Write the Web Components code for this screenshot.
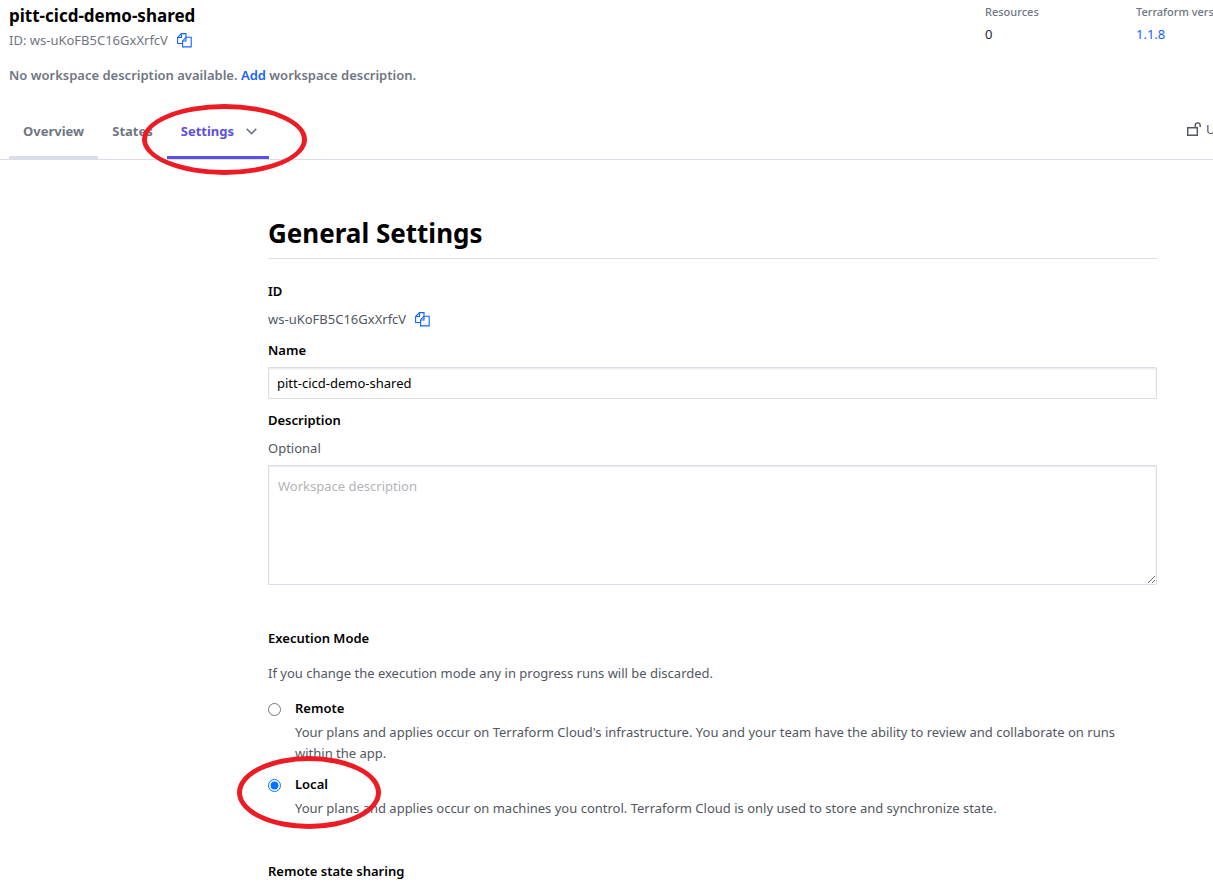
<!DOCTYPE html>
<html lang="en">
<head>
<meta charset="utf-8">
<title>pitt-cicd-demo-shared | General Settings</title>
<style>
  html { background: #fff; }
  body { margin: 0; font: 13px/20px "Noto Sans", "Open Sans", sans-serif; color: #525761; overflow-x: hidden; }
</style>
</head>
<body>
<workspace-page></workspace-page>

<script>
const define = (name, html) => {
  const template = document.createElement('template');
  template.innerHTML = html;
  customElements.define(name, class extends HTMLElement {
    constructor() {
      super();
      this.attachShadow({ mode: 'open' }).append(template.content.cloneNode(true));
    }
  });
};

define('copy-button', `
  <style>
    :host { display: inline-flex; }
    button { display: flex; padding: 0; border: 0; background: none; cursor: pointer; }
    svg { display: block; }
  </style>
  <button type="button" aria-label="Copy ID">
    <svg width="15" height="15" viewBox="0 0 15 15" fill="none" stroke="#1563ff" stroke-width="1.100">
      <path d="M5.500 10.500H.6V4.500L4.500.6H9V4"/><path d="M.6 4.500H4.500V.6"/>
      <path d="M5.600 8 9 4.300H14.200V13.900H5.600Z"/><path d="M5.600 8H9V4.300"/>
    </svg>
  </button>`);

define('red-ellipse', `
  <style>
    :host { display: block; position: absolute; pointer-events: none; z-index: 2; }
    div { box-sizing: border-box; width: 100%; height: 100%; border: 5px solid #ed1c24; border-radius: 50%; }
  </style>
  <div></div>`);

define('workspace-stat', `
  <style>
    :host { display: block; min-width: 0; white-space: nowrap; }
    dl, dd { margin: 0; }
    dt { font-size: 11px; font-weight: 500; color: #6f7682; line-height: 16px; }
    dd { margin-top: 4px; line-height: 20px; color: #252937; }
  </style>
  <dl><dt><slot name="label"></slot></dt><dd><slot></slot></dd></dl>`);

define('workspace-header', `
  <style>
    :host { display: block; }
    .top { display: grid; grid-template-columns: minmax(0, 1fr) 151px 77px; padding: 4px 0 0 9px; }
    h2 { margin: 0; font-size: 17px; line-height: 24px; font-weight: 700; color: #000; }
    .id { display: flex; align-items: center; gap: 9px; line-height: 24px; color: #6f7682; }
    .desc { margin: 12px 0 0; line-height: 22px; font-weight: 600; color: #6f7682; }
    a { color: #1563ff; text-decoration: none; }
  </style>
  <div class="top">
    <div>
      <h2>pitt-cicd-demo-shared</h2>
      <div class="id"><span>ID: ws-uKoFB5C16GxXrfcV</span><copy-button></copy-button></div>
      <p class="desc">No workspace description available. <a href="#add">Add</a> workspace description.</p>
    </div>
    <workspace-stat><span slot="label">Resources</span>0</workspace-stat>
    <workspace-stat><span slot="label">Terraform vers</span><a href="#version">1.1.8</a></workspace-stat>
  </div>`);

define('workspace-tabs', `
  <style>
    :host { display: flex; justify-content: space-between; margin-top: 20px; padding-left: 9px; border-bottom: 1px solid #dcdee7; }
    nav { display: flex; }
    a { display: flex; align-items: center; position: relative; padding: 14px; border-bottom: 3px solid transparent;
        line-height: 22px; font-weight: 700; color: #6f7682; text-decoration: none; }
    .hover { border-color: #dcdee7; }
    .active { color: #5c4ee5; border-color: #5c4ee5; gap: 12px; padding-right: 12px; }
    red-ellipse { left: -25px; top: -2px; width: 165px; height: 71px; }
    .lock { display: flex; align-items: center; gap: 5px; width: 27px; white-space: nowrap;
            margin-top: 12px; height: 22px; padding: 0; border: 0; background: none; font: inherit; color: #525761; }
    svg { flex: none; }
  </style>
  <nav aria-label="Workspace">
    <a class="hover" href="#overview">Overview</a>
    <a href="#states">States</a>
    <a class="active" href="#settings">Settings
      <svg width="11" height="7" viewBox="0 0 11 7" fill="none" stroke="#6f7682" stroke-width="1.5"><path d="M.7.9 5.500 5.600 10.300.9"/></svg>
      <red-ellipse></red-ellipse>
    </a>
  </nav>
  <button class="lock" type="button">
    <svg width="15" height="14" viewBox="0 0 15 14" fill="none" stroke="#525761" stroke-width="1.400"><path d="M1.700 5.700H11.300V13.300H1.700Z"/><path d="M9.200 5.700V3.400A2.500 2.500 0 0 1 14.200 3.400V5"/></svg>
    <span>U</span>
  </button>`);

define('mode-option', `
  <style>
    :host { display: grid; grid-template-columns: 27px minmax(0, 1fr); position: relative; }
    ::slotted(input) { width: 13px; height: 13px; margin: 5px 0 0; accent-color: #0075ff; }
    ::slotted(label) { color: #000; line-height: 20px; }
    p { margin: 4px 0 0; padding-right: 16px; line-height: 21px; grid-column: 2; }
  </style>
  <slot name="control"></slot><slot name="label"></slot>
  <p><slot></slot></p>
  <slot name="mark"></slot>`);

define('general-settings', `
  <style>
    :host { display: block; padding: 53px 56px 4px 268px; }
    h1 { margin: 0; padding-bottom: 5px; border-bottom: 1px solid #dcdee7; font-size: 26px; line-height: 40px; font-weight: 700; color: #000; }
    h3, .label { display: block; margin: 0; font-size: 13px; line-height: 20px; font-weight: 600; color: #000; }
    form, p { margin: 0; }
    form { padding-top: 22px; }
    .id { display: flex; align-items: center; gap: 9px; margin: 8px 0 11px; }
    input[type=text], textarea { display: block; box-sizing: border-box; width: 100%; border: 1px solid #dcdee7; border-radius: 1px;
      box-shadow: inset 0 1px 2px #e4e6ee; font: inherit; color: #000; background: #fff; outline: 0; }
    input[type=text] { height: 32px; margin: 7px 0 11px; padding: 0 8px; }
    textarea { height: 120px; margin: 7px 0 43px; padding: 10px 9px; resize: vertical; }
    textarea::placeholder { color: #b2b4ba; }
    .hint { margin-top: 8px; }
    .note { margin: 15px 0; }
    mode-option { margin-bottom: 10px; }
    mode-option.last { margin-bottom: 42px; }
    red-ellipse { left: -31px; top: -18px; width: 144px; height: 73px; }
  </style>
  <h1>General Settings</h1>
  <form>
    <h3>ID</h3>
    <div class="id"><span>ws-uKoFB5C16GxXrfcV</span><copy-button></copy-button></div>
    <label class="label" for="name">Name</label>
    <input id="name" type="text" value="pitt-cicd-demo-shared">
    <label class="label" for="description">Description</label>
    <p class="hint">Optional</p>
    <textarea id="description" placeholder="Workspace description"></textarea>
    <h3>Execution Mode</h3>
    <p class="note">If you change the execution mode any in progress runs will be discarded.</p>
    <mode-option>
      <input slot="control" type="radio" name="mode" id="remote">
      <label slot="label" class="label" for="remote">Remote</label>
      Your plans and applies occur on Terraform Cloud's infrastructure. You and your team have the ability to review and collaborate on runs within the app.
    </mode-option>
    <mode-option class="last">
      <input slot="control" type="radio" name="mode" id="local" checked>
      <label slot="label" class="label" for="local">Local</label>
      Your plans and applies occur on machines you control. Terraform Cloud is only used to store and synchronize state.
      <red-ellipse slot="mark"></red-ellipse>
    </mode-option>
    <h3>Remote state sharing</h3>
  </form>`);

define('workspace-page', `
  <style>:host { display: block; }</style>
  <workspace-header></workspace-header>
  <workspace-tabs></workspace-tabs>
  <main><general-settings></general-settings></main>`);
</script>
</body>
</html>
